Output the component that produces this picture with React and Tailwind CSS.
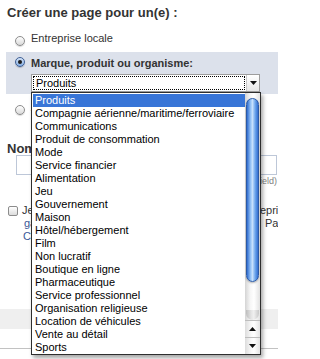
import React from "react";

const items = [
  "Produits",
  "Compagnie aérienne/maritime/ferroviaire",
  "Communications",
  "Produit de consommation",
  "Mode",
  "Service financier",
  "Alimentation",
  "Jeu",
  "Gouvernement",
  "Maison",
  "Hôtel/hébergement",
  "Film",
  "Non lucratif",
  "Boutique en ligne",
  "Pharmaceutique",
  "Service professionnel",
  "Organisation religieuse",
  "Location de véhicules",
  "Vente au détail",
  "Sports",
];

function Radio({ checked }) {
  return checked ? (
    <span className="flex h-[10px] w-[10px] shrink-0 items-center justify-center rounded-full border border-[#3f5f95] bg-[linear-gradient(to_bottom,#d3e3f7,#86afe3)] shadow-[0_1px_1px_rgba(0,0,0,0.2)]">
      <span className="block h-[4px] w-[4px] rounded-full bg-[#1c1c1c]" />
    </span>
  ) : (
    <span className="block h-[10px] w-[10px] shrink-0 rounded-full border border-[#8c8c8c] bg-[linear-gradient(to_bottom,#ffffff,#d9d9d9)] shadow-[0_1px_1px_rgba(0,0,0,0.15)]" />
  );
}

function Tri({ down = true, className = "" }) {
  return (
    <svg width="7" height="4" viewBox="0 0 7 4" className={className}>
      {down ? <path d="M0 0H7L3.5 4Z" fill="#111" /> : <path d="M0 4H7L3.5 0Z" fill="#111" />}
    </svg>
  );
}

export default function App() {
  return (
    <div className="relative h-[359px] w-[278px] overflow-hidden bg-white font-['Liberation_Sans',Arial,sans-serif] text-[#333]">
      <div className="w-[300px]">
        <h1 className="pl-[7px] pt-[5px] text-[13px] font-bold leading-[15px]">Créer une page pour un(e) :</h1>

        <div className="mt-[11px] flex h-[14px] items-start gap-[6px] pl-[15px] text-[11px] leading-[14px]">
          <span className="mt-[5px] block"><Radio /></span>
          <span>Entreprise locale</span>
        </div>

        <div className="ml-[6px] mt-[7px] bg-[#dce1eb] pb-[2px] pt-[4px]">
          <div className="flex h-[14px] items-start gap-[6px] pl-[9px] text-[11px] font-bold leading-[14px]">
            <span className="mt-[1px] block"><Radio checked /></span>
            <span>Marque, produit ou organisme:</span>
          </div>
          <div className="ml-[25px] mt-[4px] flex h-[18px] w-[229px] border border-[#9d9d9d] bg-white">
            <div className="m-[1px] flex flex-1 items-center border border-dotted border-black pl-[2px] text-[11px] leading-[12px] text-black">
              Produits
            </div>
            <div className="flex w-[13px] items-center justify-center border-l border-[#c8c8c8] bg-[linear-gradient(to_bottom,#ffffff,#e6e6e6)]">
              <Tri />
            </div>
          </div>
        </div>

        <div className="mt-[6px] flex h-[14px] items-start gap-[6px] pl-[15px] text-[11px] leading-[14px]">
          <span className="mt-[5px] block"><Radio /></span>
          <span>Artiste, groupe ou personnalité publique</span>
        </div>

        <div className="mt-[28px] pl-[7px] text-[13px] font-bold leading-[13px]">Nom de la page :</div>
        <div className="ml-[16px] h-[20px] w-[261px] border border-[#bdc7d8] bg-white" />
        <div className="ml-[16px] w-[261px] text-right text-[9px] leading-[12px] text-[#808080]">
          (Nom officiel de la page, comme dans le field)
        </div>

        <div className="mt-[17px] flex gap-[4px] pl-[8px] text-[11px] leading-[13px]">
          <span className="mt-[2px] block h-[10px] w-[10px] shrink-0 rounded-[2px] border border-[#8c8c8c] bg-[linear-gradient(to_bottom,#ffffff,#dcdcdc)]" />
          <div className="whitespace-nowrap">
            <div className="flex">
              <span className="w-[219px]">Je suis le représentant officiel de cette</span>
              <span>entreprise</span>
            </div>
            <div className="flex">
              <span className="w-[243px] pl-[2px] text-[#3b5998]">garant de cette</span>
              <span>Pages</span>
            </div>
            <div className="flex">
              <span className="pl-[1px] text-[#3b5998]">Conditions d'utilisation des Pages Facebook</span>
            </div>
          </div>
        </div>

        <div className="mt-[66px] h-[20px] bg-[#efefef]" />
        <div className="mt-[19px] h-px bg-[#c2c2c2]" />
      </div>

      {/* dropdown list */}
      <div className="absolute left-[31px] top-[92px] flex h-[263px] w-[230px] border border-[#2e2e2e] bg-white shadow-[2px_3px_4px_rgba(0,0,0,0.35)]">
        <div className="w-[213px] pl-[1px] pt-[1px]">
          {items.map((it, i) => (
            <div
              key={it}
              className={
                "h-[13px] whitespace-nowrap px-[2px] text-[11px] leading-[13px] " +
                (i === 0 ? "bg-[#3875d7] text-white" : "text-black")
              }
            >
              {it}
            </div>
          ))}
        </div>
        <div className="flex w-[15px] flex-col">
          <div className="flex flex-1 flex-col bg-[linear-gradient(to_right,#d4d4d4,#f6f6f6_35%,#ffffff_60%,#e2e2e2)]">
            <div className="mx-[1px] mt-[5px] h-[184px] rounded-full border border-[#2b5aa6] bg-[linear-gradient(to_right,#2f6ccf,#9cc8f8_35%,#c6e0fc_50%,#6aa4ec_75%,#346fd0)] shadow-[0_1px_2px_rgba(0,0,0,0.3)]" />
            <div className="mx-[1px] mt-auto h-[10px] rounded-b-full bg-[linear-gradient(to_right,#bdbdbd,#e4e4e4_40%,#f0f0f0_60%,#c8c8c8)]" />
          </div>
          <div className="flex h-[17px] items-center justify-center border-t border-[#bdbdbd] bg-[linear-gradient(to_right,#dcdcdc,#f8f8f8_40%,#ffffff_60%,#e4e4e4)]">
            <Tri down={false} />
          </div>
          <div className="flex h-[17px] items-center justify-center border-t border-[#bdbdbd] bg-[linear-gradient(to_right,#dcdcdc,#f8f8f8_40%,#ffffff_60%,#e4e4e4)]">
            <Tri />
          </div>
        </div>
      </div>
    </div>
  );
}
